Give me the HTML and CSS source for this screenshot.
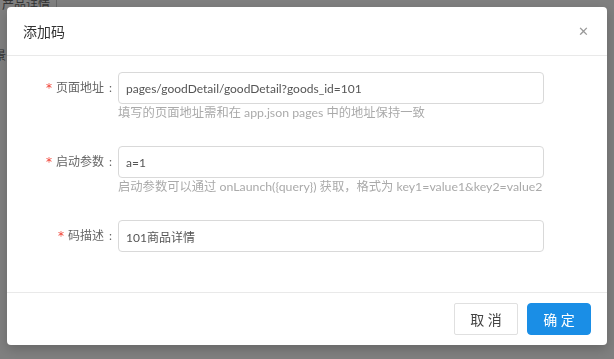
FILE: index.html
```html
<!DOCTYPE html>
<html lang="zh-CN">
<head>
    <meta charset="UTF-8">
    <meta name="viewport" content="width=device-width, initial-scale=1.0">
    <title>添加码</title>
    <link rel="stylesheet" href="styles.css">
</head>
<body>
    <div class="page">
        <div class="page-top">
            <span class="crumb">产品详情</span>
            <span class="crumb-sep"></span>
        </div>
        <div class="page-side">景</div>
    </div>
    <div class="mask"></div>
    <div class="modal">
        <div class="modal-header">
            <h3>添加码</h3>
            <span class="close">&#x2715;</span>
        </div>
        <div class="modal-body">
            <div class="form-item">
                <label class="label"><span class="req">*</span>页面地址<span class="colon">:</span></label>
                <div class="control">
                    <input type="text" value="pages/goodDetail/goodDetail?goods_id=101">
                    <div class="help">填写的页面地址需和在 app.json pages 中的地址保持一致</div>
                </div>
            </div>
            <div class="form-item">
                <label class="label"><span class="req">*</span>启动参数<span class="colon">:</span></label>
                <div class="control">
                    <input type="text" value="a=1">
                    <div class="help">启动参数可以通过 onLaunch({query}) 获取，格式为 key1=value1&amp;key2=value2</div>
                </div>
            </div>
            <div class="form-item">
                <label class="label"><span class="req">*</span>码描述<span class="colon">:</span></label>
                <div class="control">
                    <input type="text" value="101商品详情">
                </div>
            </div>
        </div>
        <div class="modal-footer">
            <button class="btn">取 消</button>
            <button class="btn btn-primary">确 定</button>
        </div>
    </div>
</body>
</html>
```

FILE: styles.css
```css
body {
    margin: 0;
    padding: 0;
    font-family: Lato, "Noto Sans CJK SC", sans-serif;
    font-size: 13px;
    color: #333;
    background: #fff;
    overflow: hidden;
}
.page {
    height: 359px;
}
.page-top {
    display: flex;
    align-items: center;
    height: 10px;
    padding-left: 2px;
}
.crumb {
    font-size: 12px;
    line-height: 10px;
    color: #666;
}
.crumb-sep {
    width: 1px;
    height: 16px;
    margin-left: 6px;
    background: #ccc;
}
.page-side {
    margin-top: 36px;
    font-size: 12px;
    color: #666;
    margin-left: -6px;
}
.mask {
    position: fixed;
    top: 0;
    left: 0;
    right: 0;
    bottom: 0;
    background: rgba(0, 0, 0, 0.5);
}
.modal {
    position: fixed;
    top: 7px;
    left: 7px;
    width: 600px;
    height: 338px;
    background: #fff;
    border-radius: 4px;
    box-shadow: 0 4px 12px rgba(0, 0, 0, 0.2);
    display: flex;
    flex-direction: column;
}
.modal-header {
    height: 48px;
    border-bottom: 1px solid #e9e9e9;
    display: flex;
    align-items: center;
    justify-content: space-between;
    padding: 0 18px 0 16px;
}
.modal-header h3 {
    margin: 0;
    font-size: 14px;
    font-weight: normal;
    color: #333;
}
.close {
    font-size: 13px;
    color: #999;
    cursor: pointer;
}
.modal-body {
    flex: 1;
    padding: 16px 0 0 0;
}
.form-item {
    display: flex;
    align-items: flex-start;
    margin-bottom: 24px;
}
.label {
    width: 111px;
    flex-shrink: 0;
    box-sizing: border-box;
    padding-right: 6px;
    text-align: right;
    line-height: 32px;
    font-size: 12px;
    color: #666;
}
.colon {
    margin: 0 0 0 5px;
}
.req {
    color: #f04134;
    margin-right: 4px;
    font-family: "DejaVu Sans", sans-serif;
    font-size: 12px;
}
.control {
    width: 426px;
}
.control input[type="text"] {
    width: 100%;
    height: 32px;
    box-sizing: border-box;
    border: 1px solid #d9d9d9;
    border-radius: 4px;
    padding: 0 7px;
    font-family: inherit;
    font-size: 12px;
    color: #555;
    outline: none;
}
.help {
    font-size: 12.3px;
    line-height: 18px;
    color: #aaa;
    white-space: nowrap;
    overflow: hidden;
}
.modal-footer {
    height: 52px;
    border-top: 1px solid #e9e9e9;
    display: flex;
    align-items: center;
    justify-content: flex-end;
    padding: 0 16px 0 0;
    gap: 9px;
}
.btn {
    height: 32px;
    width: 64px;
    border: 1px solid #e0e0e0;
    border-radius: 2px;
    background: #fff;
    font-family: inherit;
    font-size: 14px;
    color: #444;
    cursor: pointer;
    padding: 0;
}
.btn-primary {
    background: #1a8ee6;
    border-color: #1a8ee6;
    border-radius: 4px;
    color: #fff;
}
```
